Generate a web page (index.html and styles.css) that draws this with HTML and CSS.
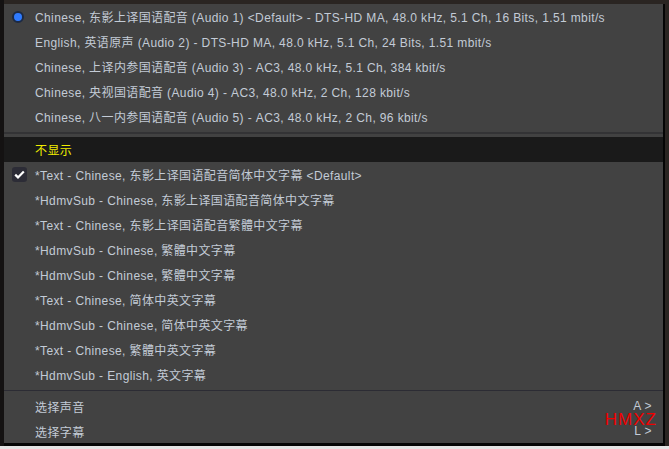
FILE: index.html
```html
<!DOCTYPE html>
<html>
<head>
<meta charset="utf-8">
<link rel="stylesheet" href="styles.css">
</head>
<body>
<div class="screen">
  <div class="menu">
    <div class="item"><span class="mark"><span class="radio"></span></span><span class="label">Chinese, 东影上译国语配音 (Audio 1) &lt;Default&gt; - DTS-HD MA, 48.0 kHz, 5.1 Ch, 16 Bits, 1.51 mbit/s</span></div>
    <div class="item"><span class="mark"></span><span class="label">English, 英语原声 (Audio 2) - DTS-HD MA, 48.0 kHz, 5.1 Ch, 24 Bits, 1.51 mbit/s</span></div>
    <div class="item"><span class="mark"></span><span class="label">Chinese, 上译内参国语配音 (Audio 3) - AC3, 48.0 kHz, 5.1 Ch, 384 kbit/s</span></div>
    <div class="item"><span class="mark"></span><span class="label">Chinese, 央视国语配音 (Audio 4) - AC3, 48.0 kHz, 2 Ch, 128 kbit/s</span></div>
    <div class="item"><span class="mark"></span><span class="label">Chinese, 八一内参国语配音 (Audio 5) - AC3, 48.0 kHz, 2 Ch, 96 kbit/s</span></div>
    <div class="sep sep1"></div>
    <div class="item active"><span class="mark"></span><span class="label">不显示</span></div>
    <div class="item"><span class="mark"><span class="check"><svg width="11" height="9" viewBox="0 0 11 9"><path d="M1.2 4.6 L4 7.4 L9.8 1.4" fill="none" stroke="#ffffff" stroke-width="2.2"/></svg></span></span><span class="label">*Text - Chinese, 东影上译国语配音简体中文字幕 &lt;Default&gt;</span></div>
    <div class="item"><span class="mark"></span><span class="label">*HdmvSub - Chinese, 东影上译国语配音简体中文字幕</span></div>
    <div class="item"><span class="mark"></span><span class="label">*Text - Chinese, 东影上译国语配音繁體中文字幕</span></div>
    <div class="item"><span class="mark"></span><span class="label">*HdmvSub - Chinese, 繁體中文字幕</span></div>
    <div class="item"><span class="mark"></span><span class="label">*HdmvSub - Chinese, 繁體中文字幕</span></div>
    <div class="item"><span class="mark"></span><span class="label">*Text - Chinese, 简体中英文字幕</span></div>
    <div class="item"><span class="mark"></span><span class="label">*HdmvSub - Chinese, 简体中英文字幕</span></div>
    <div class="item"><span class="mark"></span><span class="label">*Text - Chinese, 繁體中英文字幕</span></div>
    <div class="item"><span class="mark"></span><span class="label">*HdmvSub - English, 英文字幕</span></div>
    <div class="sep sep2"></div>
    <div class="item"><span class="mark"></span><span class="label">选择声音</span><span class="key">A &gt;</span></div>
    <div class="item"><span class="mark"></span><span class="label">选择字幕</span><span class="key">L &gt;</span></div>
    <div class="watermark">HMXZ</div>
  </div>
  <div class="strip"></div>
</div>
</body>
</html>
```
FILE: styles.css
```css
html, body {
  margin: 0;
  padding: 0;
}
body {
  width: 669px;
  height: 449px;
  overflow: hidden;
  background: #2a2522;
  font-family: "Liberation Sans", "Noto Sans CJK SC", sans-serif;
  font-size: 12px;
}
.screen {
  display: flex;
  flex-direction: column;
  padding: 4px 4px 0 4px;
  height: 449px;
  box-sizing: border-box;
  background: linear-gradient(to right, #141212 0, #141212 4px, #2a2522 4px);
}
.menu {
  position: relative;
  width: 659px;
  height: 439px;
  background: #424242;
  border-right: 2px solid #050505;
  border-bottom: 3px solid #050505;
  display: flex;
  flex-direction: column;
}
.item {
  display: flex;
  align-items: center;
  height: 25px;
  flex: none;
  color: #c3cbd6;
  white-space: nowrap;
  letter-spacing: 0.38px;
}
.item.active {
  background: #1a1a1a;
  color: #f0ec00;
}
.mark {
  width: 31px;
  flex: none;
  display: flex;
  justify-content: center;
}
.radio {
  width: 8px;
  height: 8px;
  border-radius: 50%;
  background: #2f7bff;
  border: 2px solid #1c2a44;
  margin-right: 4px;
}
.check {
  width: 15px;
  height: 15px;
  border-radius: 3px;
  background: #2c2c36;
  display: flex;
  align-items: center;
  justify-content: center;
}
.label {
  flex: 1;
}
.key {
  flex: none;
  padding-right: 11px;
  text-align: right;
  line-height: 13px;
}
.sep {
  flex: none;
  height: 8px;
  display: flex;
  align-items: center;
}
.sep::before {
  content: "";
  display: block;
  width: 100%;
  height: 2px;
  background: #333335;
}
.sep2 {
  height: 7px;
}
.sep2::before {
  height: 1px;
  background: #2c2c34;
}
.watermark {
  position: absolute;
  right: 6px;
  bottom: 17px;
  line-height: 13px;
  color: #f00000;
  font-family: "Liberation Sans", sans-serif;
  font-size: 17px;
  letter-spacing: 1px;
}
.strip {
  height: 3px;
  margin-left: -4px;
  margin-right: -4px;
  background: #e4e4e4;
}
```
